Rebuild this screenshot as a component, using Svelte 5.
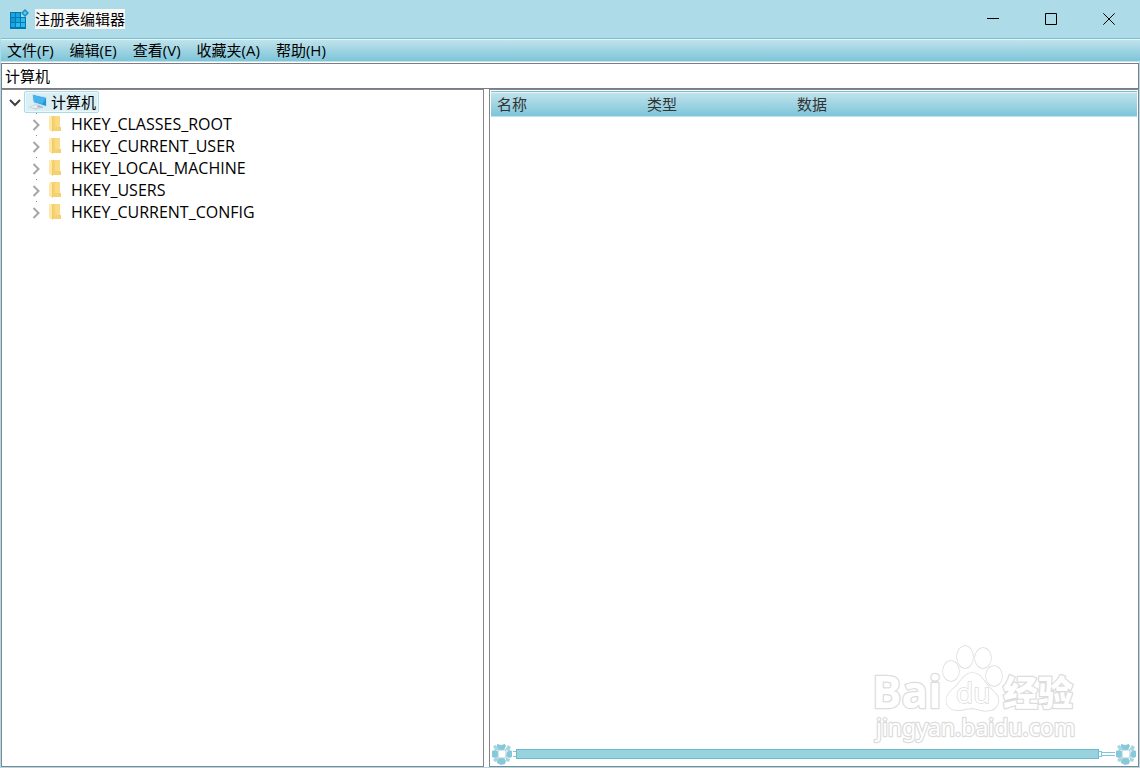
<script lang="ts">
  const menus = ['文件(F)', '编辑(E)', '查看(V)', '收藏夹(A)', '帮助(H)'];
  const hives = ['HKEY_CLASSES_ROOT', 'HKEY_CURRENT_USER', 'HKEY_LOCAL_MACHINE', 'HKEY_USERS', 'HKEY_CURRENT_CONFIG'];
  let open = $state(true);
  let path = $state('计算机');
</script>

{#snippet flower()}
  <svg width="22" height="22" viewBox="0 0 22 22" aria-hidden="true">
    <g fill="#86c9da">
      <path d="M6 1L10 2L14 1L15 3L13 7H8L6 4Z" />
      <path d="M16 9L18 7L21 8V14L18 15L15 13Z" />
      <path d="M8 15H13L15 18L14 21L10 22L6 20V18Z" />
      <path d="M7 8V14L4 15L1 14V8L4 7Z" />
    </g>
    <g fill="#a5d7e3">
      <path d="M2 3L5 2L8 7L4 7ZM17 2L20 4L18 8L14 7ZM15 14L19 16L18 19L15 18ZM7 14V18L4 19L2 17L4 15Z" />
    </g>
    <rect x="7" y="7" width="8" height="8" rx="1" fill="#fff" stroke="#aacdd6" />
  </svg>
{/snippet}

<div class="window">
  <header class="titlebar">
    <svg width="20" height="20" viewBox="0 0 20 20" aria-hidden="true">
      <path d="M1 3H12V8H17V20H1Z" fill="#0078b4" />
      <path d="M2 4H6V8H2ZM7 4H11V8H7ZM7 9H11V13H7ZM2 14H6V18H2Z" fill="#18a5e0" />
      <path d="M12 9H16V13H12ZM7 14H11V18H7ZM12 14H16V18H12Z" fill="#2dbbee" />
      <path d="M2 9H6V13H2Z" fill="#0f97d4" />
      <path d="M16 0L20 4L16 8L12 4Z" fill="#168fc3" />
      <path d="M16 2L18 4L16 6L14 4Z" fill="#59c6ed" />
    </svg>
    <h1>注册表编辑器</h1>
    <div class="controls">
      <button aria-label="最小化"><svg width="12" height="12" viewBox="0 0 12 12"><path d="M0 5.500H12" /></svg></button>
      <button aria-label="最大化"><svg width="12" height="12" viewBox="0 0 12 12"><path d="M.5 .5H11.500V11.500H.5Z" /></svg></button>
      <button aria-label="关闭"><svg width="12" height="12" viewBox="0 0 12 12"><path d="M.3 .3L11.700 11.700M11.700 .3L.3 11.700" /></svg></button>
    </div>
  </header>

  <nav class="menubar glossy">
    {#each menus as item}<button>{item}</button>{/each}
  </nav>

  <div class="client">
    <input class="address" aria-label="地址" bind:value={path} />
    <main>
      <section class="tree">
        <div class="root">
          <button class="toggle" aria-label="展开计算机" aria-expanded={open} onclick={() => (open = !open)}>
            <svg width="12" height="8" viewBox="0 0 12 8"><path d="M1 1L6 6L11 1" fill="none" stroke="#404040" stroke-width="2" /></svg>
          </button>
          <button class="selected">
            <svg width="20" height="18" viewBox="0 0 20 18" aria-hidden="true">
              <path d="M4 1L19 4V14L5 10Z" fill="#c4e6f5" />
              <path d="M5 2L18 5V13L6 9Z" fill="#2595dc" />
              <path d="M5 2L18 5L14 11L6 9Z" fill="#48b2ed" />
              <path d="M0 14L8 11L15 14L8 17Z" fill="#c9d5da" />
              <path d="M2 14L8 12L12 14L7 15Z" fill="#e8eef0" />
              <path d="M10 12L15 14V15L9 14Z" fill="#a6b9c2" />
            </svg>计算机
          </button>
        </div>
        {#if open}
          <ul>
            {#each hives as hive}
              <li>
                <button class="toggle" aria-label={`展开 ${hive}`}>
                  <svg width="8" height="12" viewBox="0 0 8 12"><path d="M1.500 1L6.500 6L1.500 11" fill="none" stroke="#a6a6a6" stroke-width="2" /></svg>
                </button>
                <button class="key">
                  <svg width="12" height="16" viewBox="0 0 12 16" aria-hidden="true">
                    <path d="M2 0H11V11H12V15H2Z" fill="#f6d173" />
                    <path d="M6 0H11V11H6Z" fill="#fadb82" />
                    <path d="M0 0L4 2V16L0 14Z" fill="#ffe8a4" />
                    <path d="M3.500 2V15.500" stroke="#efca70" />
                  </svg>{hive}
                </button>
              </li>
            {/each}
          </ul>
        {/if}
      </section>

      <section class="values">
        <table>
          <thead><tr class="glossy"><th class="name">名称</th><th class="type">类型</th><th>数据</th></tr></thead>
        </table>
        <div class="scrollbar">
          <button aria-label="向左滚动">{@render flower()}</button>
          <span class="cap"></span>
          <span class="thumb"></span>
          <span class="cap end"></span>
          <span class="link"></span>
          <button aria-label="向右滚动">{@render flower()}</button>
        </div>
        <svg class="watermark" width="214" height="106" viewBox="-4 0 214 106" aria-label="Baidu 经验">
          <g fill="#fff" stroke="#dcdcdc" stroke-width="1.500" paint-order="stroke">
            <g stroke-width="2.500" stroke-linejoin="round">
              <text x="-2" y="67" class="logo">Bai</text>
              <text x="129" y="65" class="cjk">经验</text>
              <text x="2" y="95" class="site">jingyan.baidu.com</text>
            </g>
            <ellipse cx="77" cy="30" rx="8" ry="10" />
            <ellipse cx="91" cy="16" rx="8" ry="11" />
            <ellipse cx="109" cy="17" rx="8" ry="10" />
            <ellipse cx="120" cy="35" rx="8" ry="10" />
            <path d="M98 32C89 32 87 42 80 47C74 52 71 57 73 63C76 70 84 70 92 68C97 67 100 67 106 69C115 71 122 69 124 62C126 55 120 51 114 45C109 39 107 32 98 32Z" />
            <text x="82" y="62" class="du">du</text>
          </g>
        </svg>
      </section>
    </main>
  </div>
</div>

<style>
  :global(body) { margin: 0; }
  * { box-sizing: border-box; }
  .window {
    min-height: 100vh;
    display: flex;
    flex-direction: column;
    background: #addbe7;
    color: #000;
    font: 15px/20px "Open Sans", "Noto Sans CJK SC", sans-serif;
  }
  button { font: inherit; color: inherit; background: none; border: 0; padding: 0; }
  svg { display: block; flex: none; }
  .titlebar { height: 38px; display: flex; align-items: center; padding-left: 9px; gap: 6px; }
  h1 { margin: 0; font-size: 15px; line-height: 20px; font-weight: 400; background: #f7f8f8; }
  .controls { display: flex; margin-left: auto; align-self: stretch; padding-right: 2px; }
  .controls button { width: 58px; display: grid; place-items: center; }
  .controls path { stroke: #000; fill: none; }
  .glossy {
    background: linear-gradient(#c3e4ec, #7dc5d9);
    border-top: 1px solid #76c2d5;
    border-bottom: 1px solid #c0e3eb;
    box-shadow: inset 0 1px #e6f4f7;
  }
  .menubar { height: 24px; display: flex; align-items: center; gap: 16px; margin-left: 1px; padding: 0 6px; }
  .client { flex: 1; display: flex; flex-direction: column; margin: 0 1px 1px; padding-top: 1px; background: #fff; }
  .address {
    width: 100%; height: 26px; border: 1px solid #7d7c82; padding: 0 3px 2px;
    background: #fff; color: #000; font: inherit; outline: 0;
  }
  main { flex: 1; display: grid; grid-template-columns: 483fr 650fr; gap: 5px; }
  section { border: 1px solid #86858d; }
  .tree { padding-top: 1px; }
  .root { display: flex; height: 22px; }
  .toggle { width: 22px; display: grid; place-items: center; padding-top: 2px; }
  .root .toggle { padding-left: 4px; }
  .selected {
    display: flex; align-items: center; gap: 3px; height: 22px; padding: 0 2px 0 3px;
    background: #d9eff4; border: 1px solid #a9dce8; border-radius: 2px;
    box-shadow: inset 0 0 0 1px #edf8fa;
  }
  ul { list-style: none; margin: 0; padding: 0 0 0 23px; }
  li {
    display: flex; height: 22px;
    background: linear-gradient(#888, #888) 11px 0 / 1px 1px no-repeat;
  }
  .key { display: flex; align-items: center; gap: 10px; padding-left: 2px; font-size: 16px; }
  .values { position: relative; display: flex; flex-direction: column; padding: 1px; }
  table { width: 100%; border-collapse: separate; border-spacing: 0; table-layout: fixed; }
  thead { display: block; }
  tr { display: flex; height: 26px; align-items: center; }
  th { font-weight: 400; text-align: left; color: #333; padding-left: 6px; }
  .name, .type { width: 150px; }
  .scrollbar { display: flex; align-items: center; height: 22px; margin-top: auto; }
  .thumb { flex: 1; height: 10px; background: #99d2df; border: 1px solid #6bbdce; }
  .cap { width: 3px; height: 6px; border: solid #7cc6d5; border-width: 1px 0; }
  .end { border-right-width: 1px; }
  .link { width: 13px; height: 4px; border: solid #7cc6d5; border-width: 1px 0; }
  .watermark { position: absolute; right: 54px; bottom: 19px; }
  .logo { font: 700 44px "Open Sans", sans-serif; }
  .du { font: 400 28px "Open Sans", sans-serif; }
  .cjk { font: 900 35px "Noto Sans CJK SC", sans-serif; }
  .site { font: 400 23px "Noto Sans", sans-serif; }
</style>
